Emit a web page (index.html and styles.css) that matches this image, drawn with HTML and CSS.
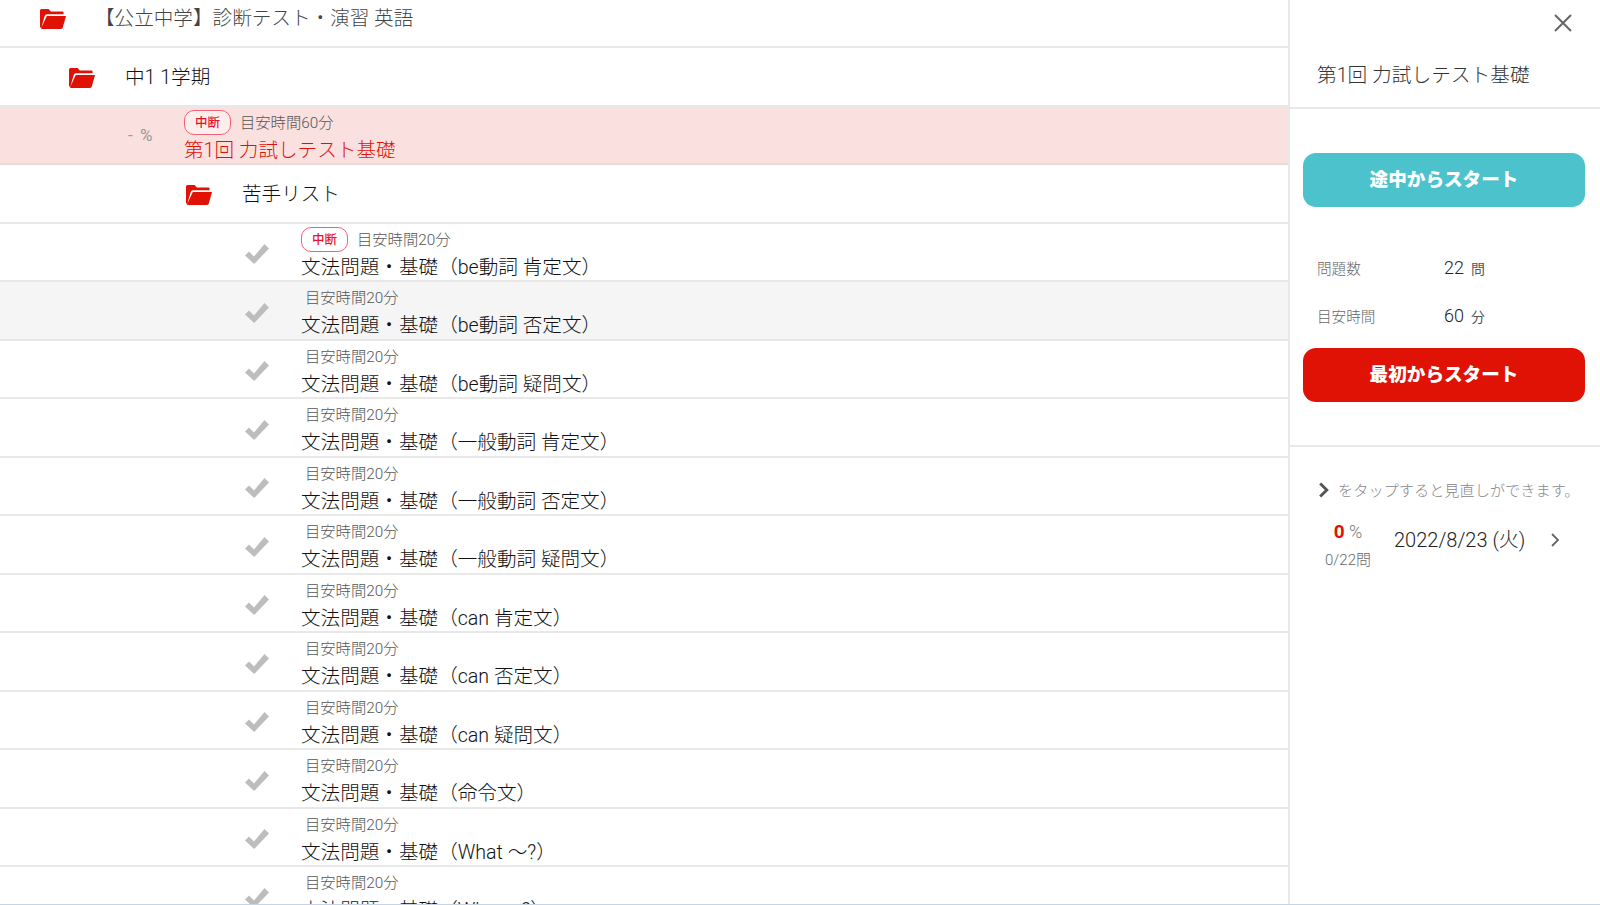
FILE: index.html
```html
<!DOCTYPE html>
<html lang="ja">
<head>
    <meta charset="UTF-8">
    <title>第1回 力試しテスト基礎</title>
    <link rel="stylesheet" href="styles.css">
</head>
<body>

<svg class="sprites" width="0" height="0">
    <symbol id="folder" viewBox="0 0 26 20">
        <path d="M1.5 0H8.6L10.8 2.600H22.400Q23.600 2.600 23.600 3.800V5.200H7Q5.200 5.200 4.700 7L1.800 17V18.400L0 18.400V1.600Q0 0 1.500 0Z"/>
        <path d="M6.800 7H26L22.800 18.600Q22.400 20 21 20H1.800Q.8 20 1.100 19Z"/>
    </symbol>
    <symbol id="check" viewBox="0 0 24 20">
        <path d="M0 11.500 4 7.500 9 12.500 19.500 0 24 4.500 9.200 20Z"/>
    </symbol>
</svg>

<div class="page">
    <div class="list">
        <div class="row row-top lv0">
            <svg class="folder"><use href="#folder"/></svg>
            <div class="folder-name">【公立中学】診断テスト・演習 英語</div>
        </div>
        <div class="row lv1">
            <svg class="folder"><use href="#folder"/></svg>
            <div class="folder-name">中1 1学期</div>
        </div>
        <div class="row lv2 active">
            <div class="percent">- %</div>
            <div class="test">
                <div class="meta"><span class="tag">中断</span><span class="time">目安時間60分</span></div>
                <div class="test-name">第1回 力試しテスト基礎</div>
            </div>
        </div>
        <div class="row lv2f">
            <svg class="folder"><use href="#folder"/></svg>
            <div class="folder-name">苦手リスト</div>
        </div>
        <div class="row lv3">
            <svg class="check"><use href="#check"/></svg>
            <div class="test">
                <div class="meta"><span class="tag">中断</span><span class="time">目安時間20分</span></div>
                <div class="test-name">文法問題・基礎（be動詞 肯定文）</div>
            </div>
        </div>
        <div class="row lv3 hover">
            <svg class="check"><use href="#check"/></svg>
            <div class="test">
                <div class="meta"><span class="time plain">目安時間20分</span></div>
                <div class="test-name">文法問題・基礎（be動詞 否定文）</div>
            </div>
        </div>
        <div class="row lv3">
            <svg class="check"><use href="#check"/></svg>
            <div class="test">
                <div class="meta"><span class="time plain">目安時間20分</span></div>
                <div class="test-name">文法問題・基礎（be動詞 疑問文）</div>
            </div>
        </div>
        <div class="row lv3">
            <svg class="check"><use href="#check"/></svg>
            <div class="test">
                <div class="meta"><span class="time plain">目安時間20分</span></div>
                <div class="test-name">文法問題・基礎（一般動詞 肯定文）</div>
            </div>
        </div>
        <div class="row lv3">
            <svg class="check"><use href="#check"/></svg>
            <div class="test">
                <div class="meta"><span class="time plain">目安時間20分</span></div>
                <div class="test-name">文法問題・基礎（一般動詞 否定文）</div>
            </div>
        </div>
        <div class="row lv3">
            <svg class="check"><use href="#check"/></svg>
            <div class="test">
                <div class="meta"><span class="time plain">目安時間20分</span></div>
                <div class="test-name">文法問題・基礎（一般動詞 疑問文）</div>
            </div>
        </div>
        <div class="row lv3">
            <svg class="check"><use href="#check"/></svg>
            <div class="test">
                <div class="meta"><span class="time plain">目安時間20分</span></div>
                <div class="test-name">文法問題・基礎（can 肯定文）</div>
            </div>
        </div>
        <div class="row lv3">
            <svg class="check"><use href="#check"/></svg>
            <div class="test">
                <div class="meta"><span class="time plain">目安時間20分</span></div>
                <div class="test-name">文法問題・基礎（can 否定文）</div>
            </div>
        </div>
        <div class="row lv3">
            <svg class="check"><use href="#check"/></svg>
            <div class="test">
                <div class="meta"><span class="time plain">目安時間20分</span></div>
                <div class="test-name">文法問題・基礎（can 疑問文）</div>
            </div>
        </div>
        <div class="row lv3">
            <svg class="check"><use href="#check"/></svg>
            <div class="test">
                <div class="meta"><span class="time plain">目安時間20分</span></div>
                <div class="test-name">文法問題・基礎（命令文）</div>
            </div>
        </div>
        <div class="row lv3">
            <svg class="check"><use href="#check"/></svg>
            <div class="test">
                <div class="meta"><span class="time plain">目安時間20分</span></div>
                <div class="test-name">文法問題・基礎（What ～?）</div>
            </div>
        </div>
        <div class="row lv3">
            <svg class="check"><use href="#check"/></svg>
            <div class="test">
                <div class="meta"><span class="time plain">目安時間20分</span></div>
                <div class="test-name">文法問題・基礎（Who ～?）</div>
            </div>
        </div>
    </div>

    <aside class="side">
        <div class="side-close">
            <svg class="close" viewBox="0 0 18 18"><path d="M1 1 17 17M17 1 1 17"/></svg>
        </div>
        <h2 class="side-title">第1回 力試しテスト基礎</h2>
        <div class="side-actions">
            <button class="btn btn-resume">途中からスタート</button>
            <div class="info">
                <div class="info-label">問題数</div>
                <div class="info-value">22<span class="unit">問</span></div>
            </div>
            <div class="info">
                <div class="info-label">目安時間</div>
                <div class="info-value">60<span class="unit">分</span></div>
            </div>
            <button class="btn btn-start">最初からスタート</button>
        </div>
        <div class="side-history">
            <div class="hint">
                <svg class="chev" viewBox="0 0 10 16"><path d="M2 2 8 8 2 14"/></svg>
                <span>をタップすると見直しができます。</span>
            </div>
            <div class="result">
                <div class="score">
                    <div class="score-rate"><b>0</b> %</div>
                    <div class="score-count">0/22問</div>
                </div>
                <div class="result-date">2022/8/23 (火)</div>
                <svg class="chev chev-thin" viewBox="0 0 10 16"><path d="M2 2 8 8 2 14"/></svg>
            </div>
        </div>
    </aside>
</div>

</body>
</html>
```

FILE: styles.css
```css
* { box-sizing: border-box; }
html, body { height: 100%; }
body {
    margin: 0;
    font-family: Roboto, 'Noto Sans CJK JP', sans-serif;
    color: #111;
    background: #fff;
    overflow: hidden;
}
.sprites { display: block; }
.page {
    display: flex;
    height: 905px;
    border-bottom: 1px solid #c5d5e5;
    overflow: hidden;
}
.list {
    flex: 1;
    min-width: 0;
    overflow: hidden;
}
.row {
    display: flex;
    align-items: center;
    height: 58.5px;
    border-bottom: 2px solid #e8e8e8;
}
.row-top { height: 48px; padding-bottom: 8px; }
.lv0 { padding-left: 40px; }
.lv1 { padding-left: 69px; padding-top: 4px; }
.lv2 { padding-left: 128px; }
.lv2f { padding-left: 186px; padding-top: 4px; }
.lv3 { padding-left: 245px; }
.active { background: #fae0df; border-bottom-color: #e8dcdc; }
.hover { background: #f5f5f5; }
.folder {
    width: 26px;
    height: 20px;
    margin-right: 30px;
    fill: #e01205;
    flex-shrink: 0;
}
.folder-name { font-size: 19.6px; font-weight: 300; line-height: 1; }
.lv0 .folder-name { color: #444; margin-left: -1px; }
.percent {
    width: 56px;
    font-size: 17px;
    word-spacing: 3px;
    color: #999;
    white-space: nowrap;
    flex-shrink: 0;
    margin-top: 1px;
}
.check {
    width: 24px;
    height: 20px;
    margin: 5px 32px 0 0;
    fill: #bdbdbd;
    flex-shrink: 0;
}
.test { padding-top: 4px; }
.meta { display: flex; align-items: center; height: 28px; }
.tag {
    display: block;
    width: 47px;
    height: 25px;
    margin-top: -2px;
    line-height: 23px;
    border: 1px solid #f0637a;
    border-radius: 10px;
    background: #fff;
    color: #e8102e;
    font-size: 12.5px;
    font-weight: 500;
    text-align: center;
}
.active .tag { background: #fdeeee; }
.time {
    margin: -6px 0 0 9px;
    font-size: 15.3px;
    font-weight: 300;
    color: #555;
}
.time.plain { margin-left: 4px; }
.test-name { font-size: 19.6px; font-weight: 300; line-height: 26px; white-space: nowrap; }
.active .test-name { color: #e01205; }

.side {
    width: 312px;
    flex-shrink: 0;
    border-left: 2px solid #e8e8e8;
}
.side-close {
    display: flex;
    justify-content: flex-end;
    height: 47px;
    padding: 14px 28px 0 0;
}
.close { width: 18px; height: 18px; stroke: #666; stroke-width: 2; fill: none; }
.side-title {
    margin: 0;
    height: 62px;
    padding: 16px 0 0 27px;
    font-size: 19.7px;
    font-weight: 300;
    line-height: 26px;
    color: #333;
    border-bottom: 2px solid #e8e8e8;
}
.side-actions {
    padding: 44px 15px 43px 13px;
    border-bottom: 2px solid #e8e8e8;
}
.btn {
    display: block;
    width: 100%;
    height: 54px;
    padding-bottom: 6px;
    border: none;
    border-radius: 13px;
    color: #fff;
    font-family: inherit;
    font-size: 18.6px;
    font-weight: 900;
}
.btn-resume { background: #4cc3cc; margin-bottom: 36px; }
.btn-start { background: #e01205; margin-top: 9px; }
.info {
    display: flex;
    align-items: center;
    height: 48px;
    padding-left: 14px;
}
.info-label { width: 127px; font-size: 14.6px; font-weight: 300; color: #666; margin-top: 1px; }
.info-value { font-size: 18px; font-weight: 300; color: #222; margin-top: 1px; }
.unit { margin-left: 7px; font-size: 14px; font-weight: 400; color: #555; }
.side-history { padding: 31px 0 0 28px; }
.hint {
    display: flex;
    align-items: center;
    font-size: 15.2px;
    font-weight: 300;
    color: #888;
    white-space: nowrap;
}
.chev { width: 11px; height: 18px; stroke: #555; stroke-width: 2.6; fill: none; margin: 2px 9px 0 0; flex-shrink: 0; }
.chev-thin { width: 10px; height: 16px; stroke: #666; stroke-width: 1.800; margin: 14px 0 0 25px; }
.result {
    display: flex;
    align-items: flex-start;
    margin-top: 18px;
}
.score { width: 76px; margin-left: -8px; text-align: center; font-weight: 300; flex-shrink: 0; }
.score-rate { font-size: 18px; color: #777; line-height: 28px; }
.score-rate b { color: #e01205; font-size: 19px; font-weight: 700; }
.score-count { font-size: 15px; color: #666; line-height: 28px; }
.result-date { margin: 10px 0 0 8px; font-size: 20px; line-height: 24px; font-weight: 300; color: #222; white-space: nowrap; }
```
